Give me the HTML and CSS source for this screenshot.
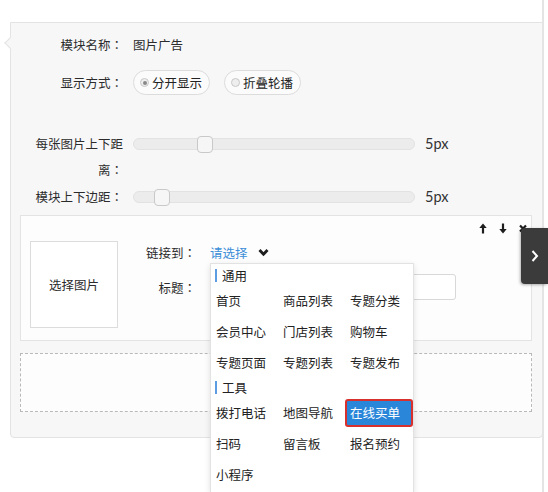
FILE: index.html
```html
<!DOCTYPE html>
<html>
<head>
<meta charset="utf-8">
<link rel="stylesheet" href="styles.css">
</head>
<body>
<div class="page">
  <div class="panel">
    <span class="notch"></span>
    <div class="row r1">
      <div class="label">模块名称<span class="c">：</span></div>
      <div class="val">图片广告</div>
    </div>
    <div class="row r2">
      <div class="label">显示方式<span class="c">：</span></div>
      <div class="pills">
        <span class="pill"><span class="radio on"></span>分开显示</span>
        <span class="pill"><span class="radio"></span>折叠轮播</span>
      </div>
    </div>
    <div class="row r3">
      <div class="label two">每张图片上下距<br>离<span class="c">：</span></div>
      <div class="slider"><span class="thumb" style="left:63px"></span></div>
      <div class="px">5px</div>
    </div>
    <div class="row r4">
      <div class="label">模块上下边距<span class="c">：</span></div>
      <div class="slider"><span class="thumb" style="left:20px"></span></div>
      <div class="px">5px</div>
    </div>

    <div class="card">
      <div class="tools">
        <svg class="ico" viewBox="0 0 8 11" width="8" height="11"><path d="M4 2 L4 10.5" stroke="#1e1e1e" stroke-width="2.2"/><path d="M0.3 5 L4 0.5 L7.7 5 Z" fill="#1e1e1e"/></svg>
        <svg class="ico" viewBox="0 0 8 11" width="8" height="11"><path d="M4 0.5 L4 9" stroke="#1e1e1e" stroke-width="2.2"/><path d="M0.3 6 L4 10.5 L7.7 6 Z" fill="#1e1e1e"/></svg>
        <svg class="ico" viewBox="0 0 8 11" width="8" height="11"><path d="M1 2.5 L7 8.5 M7 2.5 L1 8.5" stroke="#1e1e1e" stroke-width="2.2"/></svg>
      </div>
      <div class="card-body">
        <div class="imgbox">选择图片</div>
        <div class="form">
          <div class="frow link">
            <div class="flabel">链接到<span class="c">：</span></div>
            <div class="select">
              <span class="sel-text">请选择</span>
              <svg class="chev" viewBox="0 0 11 9" width="11" height="9"><path d="M1.5 2 L5.5 6.3 L9.5 2" fill="none" stroke="#1e1e1e" stroke-width="2.8"/></svg>
              <div class="dropdown">
                <div class="group">通用</div>
                <div class="grid">
                  <span>首页</span><span>商品列表</span><span>专题分类</span>
                  <span>会员中心</span><span>门店列表</span><span>购物车</span>
                  <span>专题页面</span><span>专题列表</span><span>专题发布</span>
                </div>
                <div class="group">工具</div>
                <div class="grid">
                  <span>拨打电话</span><span>地图导航</span><span class="active">在线买单</span>
                  <span>扫码</span><span>留言板</span><span>报名预约</span>
                  <span>小程序</span>
                </div>
              </div>
            </div>
          </div>
          <div class="frow title">
            <div class="flabel">标题<span class="c">：</span></div>
            <div class="input"></div>
          </div>
        </div>
      </div>
    </div>

    <div class="dashed"></div>
  </div>
  <div class="tab">
    <svg viewBox="0 0 8 12" width="8" height="12"><path d="M1.5 1 L6 6 L1.5 11" fill="none" stroke="#fff" stroke-width="2"/></svg>
  </div>
</div>
</body>
</html>
```

FILE: styles.css
```css
* { box-sizing: border-box; }
html, body { margin: 0; padding: 0; background: #fff; }
body {
  font-family: "Noto Sans CJK SC", "Microsoft YaHei", sans-serif;
  font-size: 12.5px;
  color: #2b2b2b;
}
.c { font-family: "Noto Sans CJK TC", "Noto Sans CJK SC", sans-serif; }
.page {
  position: relative;
  width: 548px;
  height: 492px;
  padding: 22px 0 0 10px;
  overflow: hidden;
}
.page::after {
  content: "";
  position: absolute;
  top: 0; bottom: 0; left: 542px;
  width: 2px;
  background: #e4e4e4;
}
.panel {
  position: relative;
  width: 533px;
  background: #f7f7f8;
  border: 1px solid #e3e3e3;
  border-radius: 0 0 4px 4px;
  padding: 0 0 25px 0;
}
.notch {
  position: absolute;
  left: -5px;
  top: 16px;
  width: 8px;
  height: 8px;
  background: #f7f7f8;
  border-left: 1px solid #e3e3e3;
  border-bottom: 1px solid #e3e3e3;
  transform: rotate(45deg);
}
.row { display: flex; align-items: flex-start; }
.label {
  width: 92px;
  margin-left: 20px;
  margin-right: 10px;
  text-align: right;
  line-height: 24px;
  white-space: nowrap;
  flex: none;
}
.r1 { margin-top: 10px; height: 24px; }
.r1 .val { line-height: 24px; }
.r2 { margin-top: 13px; height: 25px; }
.r2 .label { line-height: 25px; }
.pills { display: flex; gap: 14px; }
.pill {
  display: inline-flex;
  align-items: center;
  height: 25px;
  padding: 0 7px 0 6px;
  border: 1px solid #dcdcdc;
  border-radius: 13px;
  background: #fbfbfb;
  line-height: 23px;
  color: #222;
}
.radio {
  width: 9px; height: 9px;
  border-radius: 50%;
  border: 1px solid #c8c8c8;
  background: #eee;
  margin-right: 3px;
  position: relative;
}
.radio.on::after {
  content: "";
  position: absolute;
  left: 1.5px; top: 1.5px;
  width: 4px; height: 4px;
  border-radius: 50%;
  background: #888;
}
.r3 { margin-top: 36px; height: 53px; }
.r3 .label { line-height: 26px; height: 52px; }
.r4 { height: 27px; }
.r4 .label { line-height: 26px; }
.slider {
  position: relative;
  width: 282px;
  height: 12px;
  margin-top: 7px;
  background: #ececec;
  border: 1px solid #e2e2e2;
  border-radius: 6px;
  flex: none;
}
.thumb {
  position: absolute;
  top: -3px;
  width: 16px;
  height: 17px;
  background: #f6f6f6;
  border: 1px solid #c9c9c9;
  border-radius: 4px;
}
.px {
  margin-left: 10px;
  font-family: Lato, "Open Sans", sans-serif;
  font-size: 14.5px;
  line-height: 26px;
  color: #333;
}
.card {
  margin: 4px 0 0 9px;
  width: 512px;
  height: 126px;
  background: #fdfdfd;
  border: 1px solid #e3e3e3;
  display: flex;
  flex-direction: column;
}
.tools {
  height: 25px;
  display: flex;
  justify-content: flex-end;
  align-items: center;
  gap: 12px;
  padding-right: 4px;
}
.ico { display: block; }
.card-body { display: flex; align-items: flex-start; }
.imgbox {
  margin-left: 9px;
  width: 88px;
  height: 87px;
  border: 1px solid #dcdcdc;
  background: #fff;
  display: flex;
  align-items: center;
  justify-content: center;
}
.form { margin-left: 24px; }
.frow { display: flex; align-items: center; }
.flabel { width: 54px; text-align: right; margin-right: 14px; white-space: nowrap; }
.link { height: 22px; }
.title { margin-top: 11px; height: 26px; }
.select {
  position: relative;
  display: flex;
  align-items: center;
  height: 22px;
}
.sel-text { color: #3b8ed8; }
.chev { margin-left: 10px; }
.input {
  width: 246px;
  height: 26px;
  border: 1px solid #d8d8d8;
  border-radius: 3px;
  background: #fff;
}
.dashed {
  margin: 12px 0 0 9px;
  width: 512px;
  height: 59px;
  border: 1px dashed #b9b9b9;
  background: #fdfdfd;
}
.dropdown {
  position: absolute;
  left: 0;
  top: 22px;
  width: 204px;
  height: 230px;
  background: #fff;
  border: 1px solid #e2e2e2;
  box-shadow: 0 2px 6px rgba(0,0,0,0.12);
  padding-top: 2px;
  z-index: 5;
  color: #222;
}
.group {
  height: 19px;
  line-height: 19px;
  padding-left: 11px;
  position: relative;
}
.group::before {
  content: "";
  position: absolute;
  left: 4px;
  top: 3px;
  width: 2px;
  height: 13px;
  background: #5b9de0;
}
.grid {
  display: grid;
  grid-template-columns: 67px 67px 68px;
  grid-auto-rows: 31px;
  align-items: center;
}
.grid span {
  padding-left: 5px;
  line-height: 28px;
  white-space: nowrap;
}
.grid span.active {
  background: #2a86d9;
  color: #fff;
  border: 2px solid #d8302c;
  border-radius: 3px;
  padding-left: 3px;
  line-height: 24px;
  height: 28px;
}
.tab {
  position: absolute;
  right: 0;
  top: 228px;
  width: 27px;
  height: 56px;
  background: #3b3b3b;
  border-radius: 4px 0 0 4px;
  box-shadow: -1px 1px 3px rgba(0,0,0,0.3);
  display: flex;
  align-items: center;
  justify-content: center;
  z-index: 6;
}
.tab svg { display: block; }
```
